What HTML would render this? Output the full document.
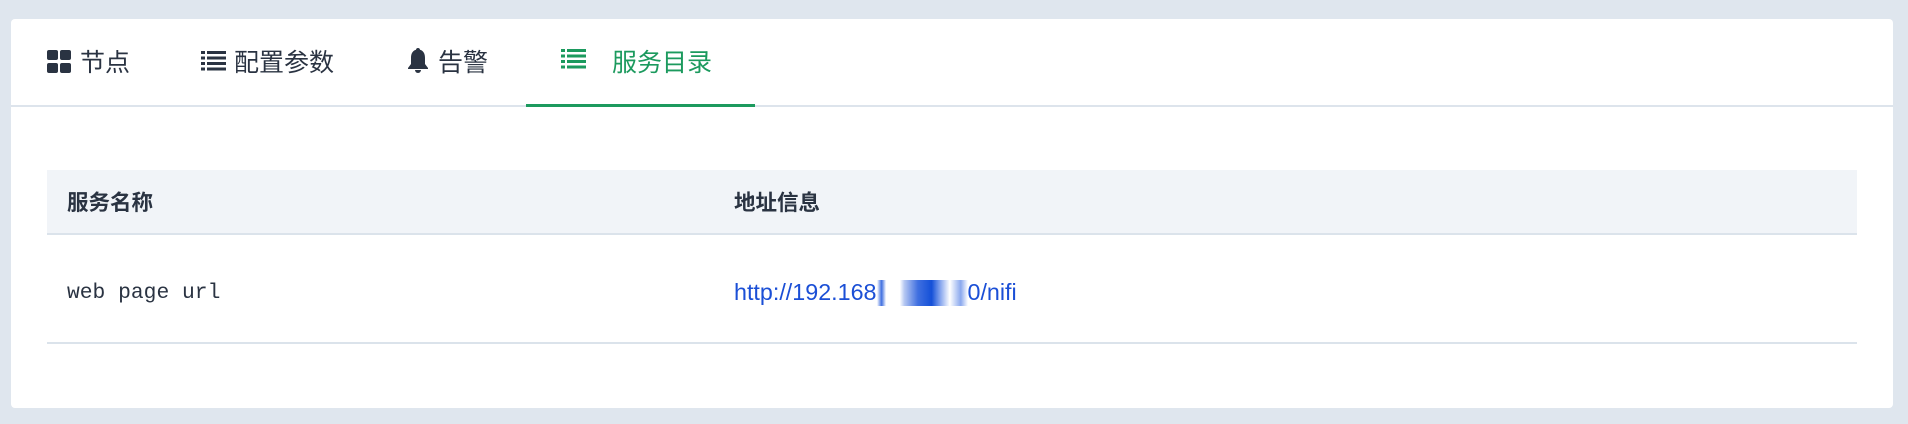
<!DOCTYPE html>
<html><head><meta charset="utf-8"><style>
*{margin:0;padding:0;box-sizing:border-box}
body{width:1908px;height:424px;background:#dfe6ee;position:relative;overflow:hidden;font-family:"Liberation Sans","Noto Sans CJK SC",sans-serif}
.card{position:absolute;left:11px;top:19px;width:1882px;height:389px;background:#fff;border-radius:4px}
.bar{position:absolute;left:0;top:86px;width:100%;height:2px;background:#dde4ec}
.ul{position:absolute;left:515px;top:85px;width:229px;height:3px;background:#1c9a5e}
.tab{position:absolute;top:30px;font-size:25px;color:#2a3342;line-height:28px;white-space:nowrap}
.tab.act{color:#1c9a5e}
.ic{position:absolute;top:31px}
.th{position:absolute;left:36px;top:151px;width:1810px;height:65px;background:#f1f4f8;border-bottom:2px solid #dbe3eb}
.th span{position:absolute;top:16px;font-size:21.5px;font-weight:bold;color:#2a3342}
.line{position:absolute;left:36px;top:323px;width:1810px;height:2px;background:#dbe3eb}
.mono{position:absolute;left:56px;top:262px;font-family:"Liberation Mono",monospace;font-size:21.3px;color:#2a3342}
.link{position:absolute;left:723px;top:260px;font-size:23.3px;color:#1b4fd6;white-space:nowrap}
</style></head><body>
<div class="card">
<svg class="ic" style="left:36px" width="24" height="24" viewBox="0 0 24 24" fill="#2a3342"><rect x="0" y="0" width="11" height="10" rx="2"/><rect x="13" y="0" width="11" height="10" rx="2"/><rect x="0" y="13" width="11" height="10" rx="2"/><rect x="13" y="13" width="11" height="10" rx="2"/></svg>
<div class="tab" style="left:69px">节点</div>
<svg class="ic" style="left:190px;top:32px" width="25" height="20" viewBox="0 0 25 20" fill="#2a3342"><rect x="0" y="0" width="4" height="3"/><rect x="6" y="0" width="19" height="3"/><rect x="0" y="5.5" width="4" height="3"/><rect x="6" y="5.5" width="19" height="3"/><rect x="0" y="11" width="4" height="3"/><rect x="6" y="11" width="19" height="3"/><rect x="0" y="16.5" width="4" height="3"/><rect x="6" y="16.5" width="19" height="3"/></svg>
<div class="tab" style="left:223px">配置参数</div>
<svg class="ic" style="left:396px;top:29px" width="22" height="26" viewBox="0 0 22 26" fill="#2a3342"><path d="M11 0c1.2 0 2 .8 2 1.8C17 3 18 6.5 18 10v6l3 4v1H1v-1l3-4v-6c0-3.5 1-7 5-8.2C9 .8 9.8 0 11 0z"/><path d="M8 22h6a3 3 0 0 1-6 0z"/></svg>
<div class="tab" style="left:427px">告警</div>
<svg class="ic" style="left:550px;top:30px" width="25" height="20" viewBox="0 0 25 20" fill="#1c9a5e"><rect x="0" y="0" width="4" height="3"/><rect x="6" y="0" width="19" height="3"/><rect x="0" y="5.5" width="4" height="3"/><rect x="6" y="5.5" width="19" height="3"/><rect x="0" y="11" width="4" height="3"/><rect x="6" y="11" width="19" height="3"/><rect x="0" y="16.5" width="4" height="3"/><rect x="6" y="16.5" width="19" height="3"/></svg>
<div class="tab act" style="left:601px">服务目录</div>
<div class="bar"></div><div class="ul"></div>
<div class="th"><span style="left:20px">服务名称</span><span style="left:687px">地址信息</span></div>
<div class="mono">web page url</div>
<div class="link">http://192.168<span style="display:inline-block;width:91px;height:26px;vertical-align:-6px;background:linear-gradient(90deg,#fff 0,#3f6fe0 5%,#fff 10%,#fff 25%,#b6c8f2 30%,#3f6fe0 45%,#1450d8 60%,#8aa8ee 70%,#fff 80%,#8aa8ee 92%,#fff 100%)"></span>0/nifi</div>
<div class="line"></div>
</div>
</body></html>
